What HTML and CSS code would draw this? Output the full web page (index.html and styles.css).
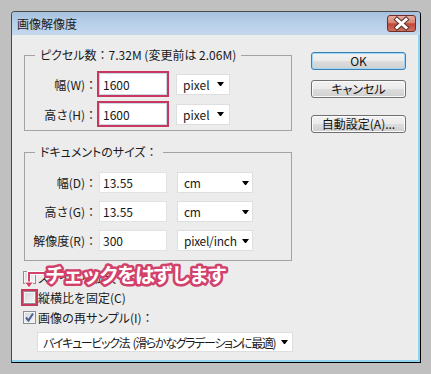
FILE: index.html
```html
<!DOCTYPE html>
<html lang="ja">
<head>
<meta charset="utf-8">
<title>画像解像度</title>
<link rel="stylesheet" href="styles.css">
</head>
<body>
<div class="window">
  <div class="titlebar">
    <span class="title">画像解像度</span>
    <div class="close">
      <svg width="27" height="15" viewBox="0 0 27 15">
        <path d="M9 3.5 L18 11.5 M18 3.5 L9 11.5" stroke="#5b3530" stroke-width="5" stroke-linecap="square" fill="none"/>
        <path d="M9 3.5 L18 11.5 M18 3.5 L9 11.5" stroke="#ffffff" stroke-width="3" stroke-linecap="square" fill="none"/>
      </svg>
    </div>
  </div>
  <div class="body">
    <div class="left">
      <fieldset class="group g1">
        <legend><span class="kana">ピクセル</span>数：7.32M (変更前は 2.06M)</legend>
        <div class="rows r1">
          <div class="row">
            <span class="lbl">幅(W)：</span>
            <div class="hl"><div class="input">1600</div></div>
            <div class="select s1">pixel<i class="arrow"></i></div>
          </div>
          <div class="row">
            <span class="lbl">高さ(H)：</span>
            <div class="hl"><div class="input">1600</div></div>
            <div class="select s1">pixel<i class="arrow"></i></div>
          </div>
        </div>
      </fieldset>
      <fieldset class="group g2">
        <legend><span class="kana">ドキュメントのサイズ</span>：</legend>
        <div class="rows r2">
          <div class="row">
            <span class="lbl lbl2">幅(D)：</span>
            <div class="input">13.55</div>
            <div class="select s2">cm<i class="arrow"></i></div>
          </div>
          <div class="row">
            <span class="lbl lbl2">高さ(G)：</span>
            <div class="input">13.55</div>
            <div class="select s2">cm<i class="arrow"></i></div>
          </div>
          <div class="row">
            <span class="lbl lbl2">解像度(R)：</span>
            <div class="input">300</div>
            <div class="select s2">pixel/inch<i class="arrow"></i></div>
          </div>
        </div>
      </fieldset>
      <div class="checks">
        <div class="check"><span class="box"></span><span class="kana">スタイルを拡大・縮小</span></div>
        <div class="check"><span class="box marked"></span><span>縦横比を固定(C)</span></div>
        <div class="check"><span class="box"><svg width="11" height="11" viewBox="0 0 11 11"><path d="M2 5.5 L4.5 8.5 L9 1.5" stroke="#4b5f94" stroke-width="2" fill="none"/></svg></span><span>画像の<span class="kana">再サンプル</span>(I)：</span></div>
      </div>
      <div class="select wide"><span class="kana tight">バイキュービック法 (滑らかなグラデーションに最適)</span><i class="arrow"></i></div>
    </div>
    <div class="right">
      <div class="btn ok">OK</div>
      <div class="btn cancel"><span class="kana">キャンセル</span></div>
      <div class="btn auto">自動設定(A)...</div>
    </div>
  </div>
  <svg class="annot" width="215" height="36" viewBox="0 0 215 36">
    <path d="M26 15 L9 15 L9 25" class="arrow-out"/>
    <path d="M26 15 L9 15 L9 25" class="arrow-in"/>
    <path d="M4.5 24 L13.5 24 L9 30 Z" class="arrow-head"/>
    <text x="25" y="24.5" class="anno-text">チェックをはずします</text>
  </svg>
</div>
</body>
</html>
```

FILE: styles.css
```css
html, body {
  margin: 0;
  padding: 0;
}
body {
  background: #c0c0c0;
  font-family: "Noto Sans CJK JP", "Noto Sans", sans-serif;
  font-size: 12px;
  color: #1a1a1a;
  width: 431px;
  height: 374px;
  overflow: hidden;
}
.kana {
  font-feature-settings: "palt";
}
.tight {
  letter-spacing: -1.35px;
  word-spacing: 2px;
}
.window {
  position: relative;
  margin: 11px 0 0 11px;
  width: 410px;
  height: 352px;
  box-sizing: border-box;
  border: 1px solid;
  border-color: #4a4a4a #000 #000 #4a4a4a;
  border-radius: 4px 4px 0 0;
  background: #ececec;
  display: flex;
  flex-direction: column;
  overflow: hidden;
}
.titlebar {
  height: 23px;
  flex: none;
  display: flex;
  align-items: center;
  justify-content: space-between;
  padding-left: 5px;
  background: linear-gradient(#a7c2df, #b9d0e9 55%, #c4d8ed);
}
.title {
  font-size: 12px;
  line-height: 14px;
  color: #1c1c1c;
}
.close {
  width: 29px;
  height: 17px;
  margin-right: 4px;
  box-sizing: border-box;
  border: 1px solid #6e2d25;
  border-radius: 3px;
  background: linear-gradient(#e8ab9d, #d88573 45%, #c3473a 52%, #cf6e5c 100%);
  display: flex;
  align-items: center;
  justify-content: center;
}
.close svg { display: block; }
.body {
  flex: 1;
  display: flex;
  gap: 19px;
  padding-left: 12px;
  box-shadow: inset -2px -2px 0 #8fd3ef;
}
.left {
  width: 268px;
  padding-top: 13px;
  display: flex;
  flex-direction: column;
}
.group {
  margin: 0;
  border: 1px solid #a3a3a3;
  min-width: 0;
  padding-left: 0;
  padding-right: 0;
}
.group legend {
  margin-left: 10px;
  padding: 0 5px;
  line-height: 14px;
}
.g1 {
  padding-top: 9px;
  padding-bottom: 3px;
}
.g2 {
  margin-top: 14px;
  padding-top: 13px;
  padding-bottom: 9px;
}
.rows {
  display: flex;
  flex-direction: column;
}
.r1 { gap: 4px; }
.r2 { gap: 8px; }
.row {
  display: flex;
  align-items: center;
}
.r1 .row { height: 26px; }
.r2 .row { height: 21px; }
.lbl {
  width: 72px;
  text-align: right;
  white-space: nowrap;
  margin-right: 0;
}
.lbl2 { margin-right: 2px; }
.hl {
  width: 72px;
  height: 26px;
  box-sizing: border-box;
  border: 2px solid #c8385e;
}
.input {
  width: 68px;
  height: 21px;
  box-sizing: border-box;
  background: #fff;
  border: 1px solid #e2e2e2;
  padding-left: 3px;
  display: flex;
  align-items: center;
  color: #161616;
}
.hl .input {
  width: 100%;
  height: 100%;
  border-color: #cbd9e8;
}
.select {
  height: 21px;
  box-sizing: border-box;
  background: #fff;
  border: 1px solid #dedede;
  padding: 0 5px 0 6px;
  display: flex;
  align-items: center;
  justify-content: space-between;
  white-space: nowrap;
}
.s1 { width: 54px; margin-left: 7px; }
.s2 { width: 76px; margin-left: 10px; padding-right: 3px; letter-spacing: -0.3px; }
.arrow {
  display: block;
  flex: none;
  width: 1px;
  height: 0;
  border-left: 3px solid transparent;
  border-right: 3px solid transparent;
  border-top: 4px solid #000;
}
.checks {
  margin-top: 6px;
  display: flex;
  flex-direction: column;
}
.check {
  height: 20px;
  display: flex;
  align-items: center;
  gap: 2px;
  white-space: nowrap;
}
.box {
  width: 13px;
  height: 13px;
  margin-left: -1px;
  box-sizing: border-box;
  border: 1px solid #8e8f8f;
  background: linear-gradient(135deg, #d4d6da, #f7f7f7);
  box-shadow: inset 0 0 0 1px #f4f4f4;
  display: flex;
  align-items: center;
  justify-content: center;
}
.box svg { display: block; }
.marked {
  outline: 2px solid #c8385e;
  outline-offset: 0;
}
.wide {
  margin-top: 5px;
  margin-left: 13px;
  width: 256px;
  height: 20px;
  padding-left: 5px;
  padding-right: 4px;
}
.right {
  width: 95px;
  margin-top: 17px;
  display: flex;
  flex-direction: column;
}
.btn {
  height: 18px;
  box-sizing: border-box;
  border: 1px solid #707070;
  border-radius: 3px;
  background: linear-gradient(#f2f2f2 0%, #ebebeb 48%, #dddddd 52%, #cfcfcf 100%);
  box-shadow: inset 0 0 0 1px #fbfbfb;
  display: flex;
  align-items: center;
  justify-content: center;
  line-height: 14px;
  color: #111;
}
.ok {
  border-color: #3c7fb1;
  box-shadow: inset 0 0 0 1px #9fd8f6;
}
.cancel { margin-top: 10px; }
.auto { margin-top: 17px; }
.annot {
  position: absolute;
  left: 8px;
  top: 246px;
  overflow: visible;
}
.arrow-out {
  fill: none;
  stroke: #ffffff;
  stroke-width: 4;
}
.arrow-in {
  fill: none;
  stroke: #d2416a;
  stroke-width: 2;
}
.arrow-head {
  fill: #d2416a;
  stroke: #ffffff;
  stroke-width: 1;
}
.anno-text {
  font-family: "Noto Sans CJK JP", sans-serif;
  font-weight: bold;
  font-size: 20px;
  letter-spacing: -2px;
  fill: #ffffff;
  stroke: #d2416a;
  stroke-width: 5px;
  stroke-linejoin: round;
  paint-order: stroke;
}
```
